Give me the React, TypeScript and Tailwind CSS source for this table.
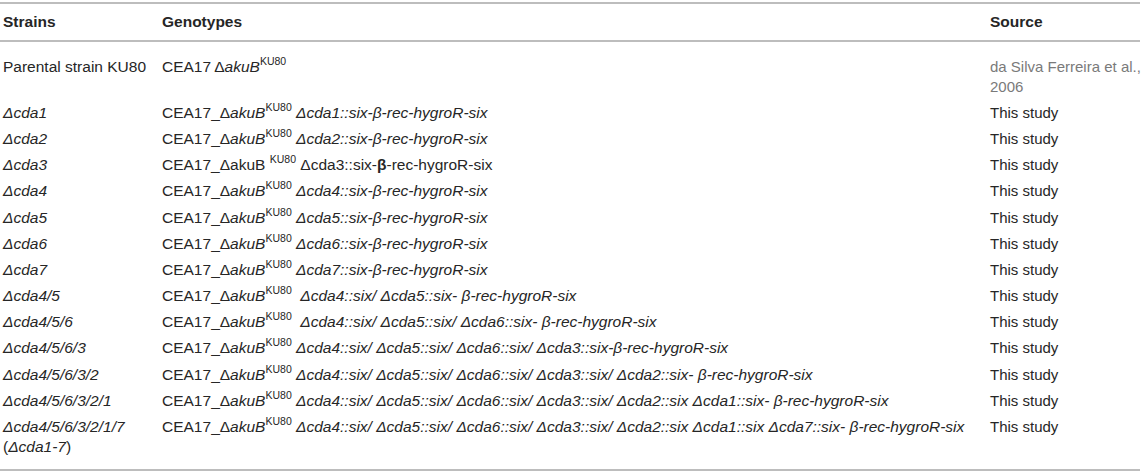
import React from 'react';

type Row = {
  strain: React.ReactNode;
  genotype: React.ReactNode;
  source: React.ReactNode;
};

const Sup = () => (
  <sup className="text-[10.5px] not-italic relative -top-[1px] align-super leading-none">KU80</sup>
);

const Base = ({ sep = '_' }: { sep?: string }) => (
  <>
    CEA17{sep}Δ<i>akuB</i>
    <Sup />
  </>
);

const study = 'This study';

const rows: Row[] = [
  {
    strain: 'Parental strain KU80',
    genotype: <Base sep={'\u2009'} />,
    source: (
      <span className="text-[#7a7a7a] whitespace-nowrap">
        da Silva Ferreira et al.,
        <br />
        2006
      </span>
    ),
  },
  { strain: <i>Δcda1</i>, genotype: <><Base /> <i>Δcda1::six-β-rec-hygroR-six</i></>, source: study },
  { strain: <i>Δcda2</i>, genotype: <><Base /> <i>Δcda2::six-β-rec-hygroR-six</i></>, source: study },
  {
    strain: <i>Δcda3</i>,
    genotype: (
      <>
        CEA17_ΔakuB <Sup /> Δcda3::six-<b className="font-bold">β</b>-rec-hygroR-six
      </>
    ),
    source: study,
  },
  { strain: <i>Δcda4</i>, genotype: <><Base /> <i>Δcda4::six-β-rec-hygroR-six</i></>, source: study },
  { strain: <i>Δcda5</i>, genotype: <><Base /> <i>Δcda5::six-β-rec-hygroR-six</i></>, source: study },
  { strain: <i>Δcda6</i>, genotype: <><Base /> <i>Δcda6::six-β-rec-hygroR-six</i></>, source: study },
  { strain: <i>Δcda7</i>, genotype: <><Base /> <i>Δcda7::six-β-rec-hygroR-six</i></>, source: study },
  {
    strain: <i>Δcda4/5</i>,
    genotype: <><Base />{'\u00a0 '}<i>Δcda4::six/ Δcda5::six- β-rec-hygroR-six</i></>,
    source: study,
  },
  {
    strain: <i>Δcda4/5/6</i>,
    genotype: <><Base />{'\u00a0 '}<i>Δcda4::six/ Δcda5::six/ Δcda6::six- β-rec-hygroR-six</i></>,
    source: study,
  },
  {
    strain: <i>Δcda4/5/6/3</i>,
    genotype: <><Base /> <i>Δcda4::six/ Δcda5::six/ Δcda6::six/ Δcda3::six-β-rec-hygroR-six</i></>,
    source: study,
  },
  {
    strain: <i>Δcda4/5/6/3/2</i>,
    genotype: <><Base /> <i>Δcda4::six/ Δcda5::six/ Δcda6::six/ Δcda3::six/ Δcda2::six- β-rec-hygroR-six</i></>,
    source: study,
  },
  {
    strain: <i>Δcda4/5/6/3/2/1</i>,
    genotype: <><Base /> <i>Δcda4::six/ Δcda5::six/ Δcda6::six/ Δcda3::six/ Δcda2::six Δcda1::six- β-rec-hygroR-six</i></>,
    source: study,
  },
  {
    strain: (
      <>
        <i>Δcda4/5/6/3/2/1/7</i>
        <br />(<i>Δcda1-7</i>)
      </>
    ),
    genotype: (
      <><Base /> <i>Δcda4::six/ Δcda5::six/ Δcda6::six/ Δcda3::six/ Δcda2::six Δcda1::six Δcda7::six- β-rec-hygroR-six</i></>
    ),
    source: study,
  },
];

export default function App() {
  return (
    <div
      className="w-[1143px] h-[476px] bg-white text-[#262626] text-[15.5px] pt-[2px] overflow-hidden"
      style={{ fontFamily: '"Liberation Sans", Arial, sans-serif' }}
    >
      <div className="w-[1140px] border-t-2 border-b-2 border-[#bdbdbd]">
        <div className="grid grid-cols-[159px_828px_1fr] h-[38px] items-center border-b-2 border-[#bdbdbd] font-bold pl-[3px]">
          <div>Strains</div>
          <div>Genotypes</div>
          <div>Source</div>
        </div>
        <div className="pt-[12px] pb-[9px]">
          {rows.map((r, i) => (
            <div key={i} className="grid grid-cols-[159px_828px_1fr] py-[3px] leading-[20px] pl-[3px]">
              <div className="whitespace-nowrap">{r.strain}</div>
              <div className="whitespace-nowrap">{r.genotype}</div>
              <div className="text-[15px]">{r.source}</div>
            </div>
          ))}
        </div>
      </div>
    </div>
  );
}
